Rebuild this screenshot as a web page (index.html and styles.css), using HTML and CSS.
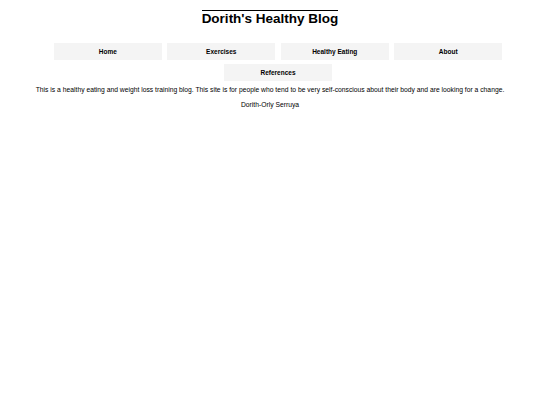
FILE: index.html
```html
<!DOCTYPE html>
<html>
<head>
<meta charset="utf-8">
<link rel="stylesheet" href="styles.css">
</head>
<body>
<header class="header">
  <h1 class="title"><span class="title-text">Dorith's Healthy Blog</span></h1>
</header>
<nav class="nav">
  <a class="nav-item" href="#">Home</a>
  <a class="nav-item" href="#">Exercises</a>
  <a class="nav-item" href="#">Healthy Eating</a>
  <a class="nav-item" href="#">About</a>
  <a class="nav-item" href="#">References</a>
</nav>
<main class="content">
  <p class="intro">This is a healthy eating and weight loss training blog. This site is for people who tend to be very self-conscious about their body and are looking for a change.</p>
  <p class="author">Dorith-Orly Serruya</p>
</main>
</body>
</html>
```
FILE: styles.css
```css
html, body {
  margin: 0;
  padding: 0;
  background: #ffffff;
}
body {
  font-family: "Liberation Sans", Arial, sans-serif;
  color: #000;
}
.header {
  text-align: center;
  padding-top: 10px;
}
.title {
  margin: 0;
  font-size: 13.5px;
  line-height: 16px;
  font-weight: bold;
}
.title-text {
  display: inline-block;
  border-top: 1.5px solid #000;
  padding-top: 0px;
}
.nav {
  display: flex;
  flex-wrap: wrap;
  justify-content: center;
  column-gap: 5.5px;
  row-gap: 3.5px;
  padding-left: 16px;
  margin-top: 16px;
}
.nav-item {
  width: 108px;
  height: 17px;
  line-height: 17px;
  background: #f4f4f4;
  color: #000;
  text-decoration: none;
  font-weight: bold;
  font-size: 6.5px;
  text-align: center;
}
.content {
  text-align: center;
  font-size: 6.75px;
  margin-top: 5px;
}
.intro {
  margin: 0;
  line-height: 8px;
}
.author {
  margin: 7px 0 0;
  line-height: 8px;
}
```
